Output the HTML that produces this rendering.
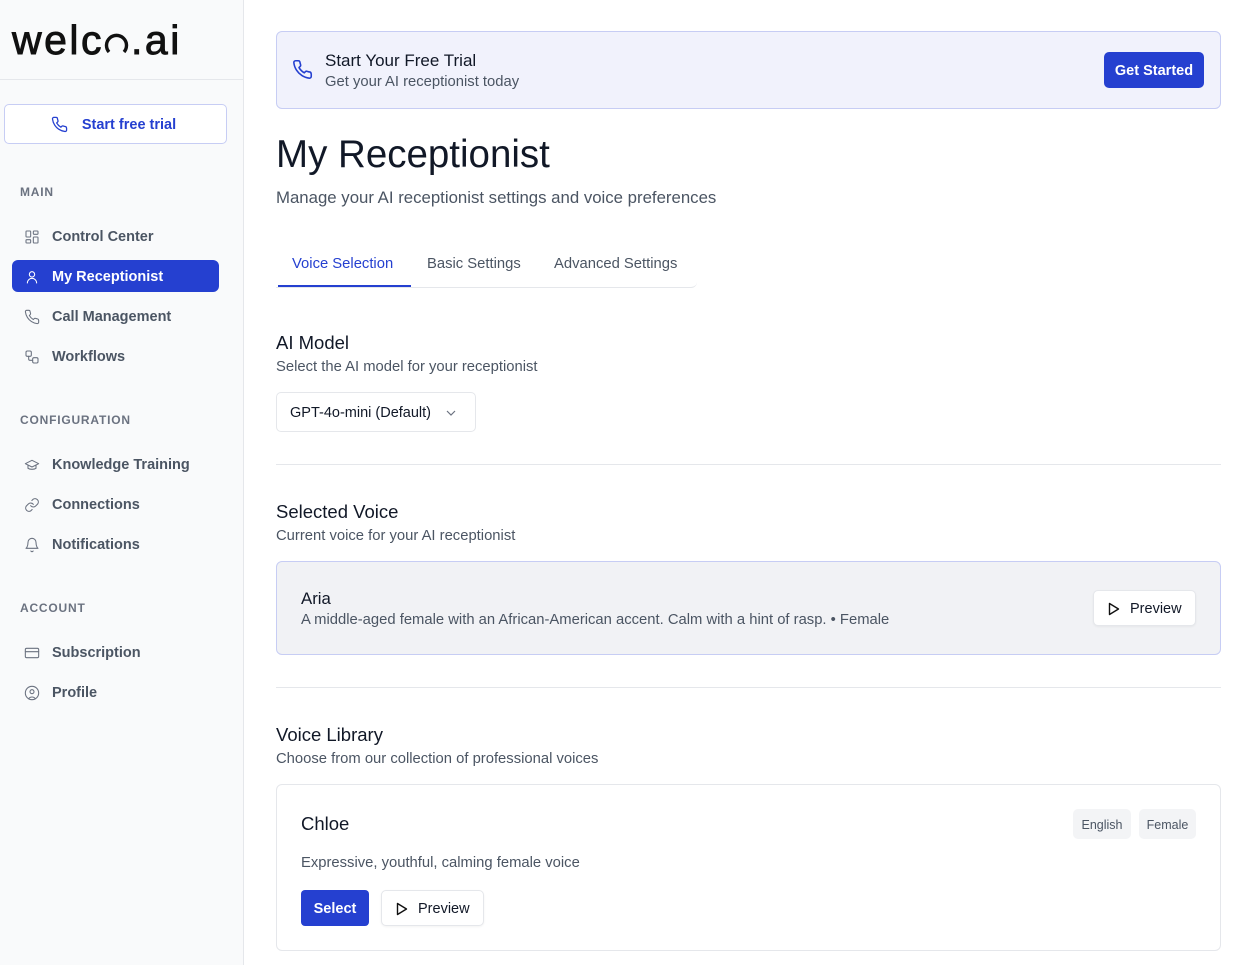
<!DOCTYPE html>
<html><head><meta charset="utf-8"><style>
*{box-sizing:border-box;margin:0;padding:0}
body{width:1246px;height:965px;overflow:hidden;font-family:"Liberation Sans",sans-serif;background:#fff;color:#111827;position:relative}
.a{position:absolute}
.side{left:0;top:0;width:244px;height:965px;background:#f9fafb;border-right:1px solid #e5e7eb}
.nav{position:absolute;left:12px;width:207px;height:32px;border-radius:6px;display:flex;align-items:center;padding-left:12px;padding-top:2px;font-size:14.5px;font-weight:bold;color:#4b5563}
.nav svg{width:16px;height:16px;margin-right:12px;fill:none;stroke:#6b7280;stroke-width:1.6;stroke-linecap:round;stroke-linejoin:round}
.nav.act{background:#2540d0;color:#fff}
.nav.act svg{stroke:#fff}
.sec{position:absolute;left:20px;font-size:12px;font-weight:bold;color:#6b7280;letter-spacing:.8px}
.h2{font-size:18.5px;color:#111827;font-weight:500}
.sub{font-size:14.8px;color:#4b5563}
.btn{position:absolute;border:1px solid #e5e7eb;border-radius:5px;background:#fff;display:flex;align-items:center;font-size:14.5px;color:#111827;box-shadow:0 1px 2px rgba(0,0,0,.05);padding-top:1px}
.hr{position:absolute;left:276px;width:945px;height:1px;background:#e5e7eb}
.logo span{letter-spacing:2.5px}
</style></head><body>
<div class="a side"></div>
<div class="a" style="left:0;top:79px;width:244px;height:1px;background:#e5e7eb"></div>
<div class="a logo" style="left:12px;top:15px;font-size:41px;line-height:50px;color:#111;-webkit-text-stroke:0.9px #111;display:flex;align-items:baseline"><span>welc</span><svg width="25" height="22" viewBox="0 0 25 22" style="margin:0 2px 0 0"><path d="M5 20 A10 10 0 1 1 20 20" fill="none" stroke="#111" stroke-width="3.4"/></svg><span>.ai</span></div>
<div class="a" style="left:4px;top:104px;width:223px;height:40px;border:1px solid #c7cdf4;border-radius:5px;background:#fff;display:flex;align-items:center;justify-content:center;color:#2540d0;font-size:14.5px;font-weight:bold;padding-top:1px"><svg width="17" height="17" viewBox="0 0 24 24" fill="none" stroke="#2540d0" stroke-width="1.8" stroke-linejoin="round" style="margin-right:14px;margin-left:-4px"><path d="M22 16.9v3a2 2 0 0 1-2.2 2 19.8 19.8 0 0 1-8.6-3.1 19.5 19.5 0 0 1-6-6A19.8 19.8 0 0 1 2.1 4.2 2 2 0 0 1 4.1 2h3a2 2 0 0 1 2 1.7c.1.9.4 1.8.7 2.7a2 2 0 0 1-.5 2.1L8 9.8a16 16 0 0 0 6 6l1.3-1.3a2 2 0 0 1 2.1-.4c.9.3 1.8.6 2.7.7a2 2 0 0 1 1.7 2z"/></svg>Start free trial</div>
<div class="sec" style="top:185px">MAIN</div>
<div class="nav" style="top:220px"><svg viewBox="0 0 24 24"><rect x="3" y="3" width="7" height="9" rx="1"/><rect x="14" y="3" width="7" height="5" rx="1"/><rect x="14" y="12" width="7" height="9" rx="1"/><rect x="3" y="16" width="7" height="5" rx="1"/></svg>Control Center</div>
<div class="nav act" style="top:260px"><svg viewBox="0 0 24 24"><circle cx="12" cy="8" r="4"/><path d="M5 21a7 7 0 0 1 14 0"/></svg>My Receptionist</div>
<div class="nav" style="top:300px"><svg viewBox="0 0 24 24"><path d="M22 16.9v3a2 2 0 0 1-2.2 2 19.8 19.8 0 0 1-8.6-3.1 19.5 19.5 0 0 1-6-6A19.8 19.8 0 0 1 2.1 4.2 2 2 0 0 1 4.1 2h3a2 2 0 0 1 2 1.7c.1.9.4 1.8.7 2.7a2 2 0 0 1-.5 2.1L8 9.8a16 16 0 0 0 6 6l1.3-1.3a2 2 0 0 1 2.1-.4c.9.3 1.8.6 2.7.7a2 2 0 0 1 1.7 2z"/></svg>Call Management</div>
<div class="nav" style="top:340px"><svg viewBox="0 0 24 24"><rect x="3" y="3" width="8" height="8" rx="2"/><rect x="13" y="13" width="8" height="8" rx="2"/><path d="M7 11v4a2 2 0 0 0 2 2h4"/></svg>Workflows</div>
<div class="sec" style="top:413px">CONFIGURATION</div>
<div class="nav" style="top:448px"><svg viewBox="0 0 24 24"><path d="M22 10 12 5 2 10l10 5 10-5z"/><path d="M6 12v5c3 2 9 2 12 0v-5"/></svg>Knowledge Training</div>
<div class="nav" style="top:488px"><svg viewBox="0 0 24 24"><path d="M10 13a5 5 0 0 0 7.5.5l3-3a5 5 0 0 0-7-7l-1.7 1.7"/><path d="M14 11a5 5 0 0 0-7.5-.5l-3 3a5 5 0 0 0 7 7l1.7-1.7"/></svg>Connections</div>
<div class="nav" style="top:528px"><svg viewBox="0 0 24 24"><path d="M6 8a6 6 0 0 1 12 0c0 7 3 9 3 9H3s3-2 3-9"/><path d="M10.3 21a1.9 1.9 0 0 0 3.4 0"/></svg>Notifications</div>
<div class="sec" style="top:601px">ACCOUNT</div>
<div class="nav" style="top:636px"><svg viewBox="0 0 24 24"><rect x="2" y="5" width="20" height="14" rx="2"/><path d="M2 10h20"/></svg>Subscription</div>
<div class="nav" style="top:676px"><svg viewBox="0 0 24 24"><circle cx="12" cy="12" r="10"/><circle cx="12" cy="10" r="3"/><path d="M7 20.7a6 6 0 0 1 10 0"/></svg>Profile</div>

<div class="a" style="left:276px;top:31px;width:945px;height:78px;background:#f1f2fc;border:1px solid #c7cdf4;border-radius:6px"></div>
<svg class="a" style="left:292px;top:59px" width="21" height="21" viewBox="0 0 24 24" fill="none" stroke="#2540d0" stroke-width="1.8" stroke-linejoin="round"><path d="M22 16.9v3a2 2 0 0 1-2.2 2 19.8 19.8 0 0 1-8.6-3.1 19.5 19.5 0 0 1-6-6A19.8 19.8 0 0 1 2.1 4.2 2 2 0 0 1 4.1 2h3a2 2 0 0 1 2 1.7c.1.9.4 1.8.7 2.7a2 2 0 0 1-.5 2.1L8 9.8a16 16 0 0 0 6 6l1.3-1.3a2 2 0 0 1 2.1-.4c.9.3 1.8.6 2.7.7a2 2 0 0 1 1.7 2z"/></svg>
<div class="a" style="left:325px;top:51px;font-size:17px;color:#111827">Start Your Free Trial</div>
<div class="a sub" style="left:325px;top:74px">Get your AI receptionist today</div>
<div class="a" style="left:1104px;top:52px;width:100px;height:36px;background:#2540d0;border-radius:5px;color:#fff;font-size:14.5px;font-weight:bold;display:flex;align-items:center;justify-content:center;padding-top:2px">Get Started</div>

<div class="a" style="left:276px;top:130px;font-size:38.5px;color:#111827;line-height:50px">My Receptionist</div>
<div class="a" style="left:276px;top:188px;font-size:16.8px;color:#4b5563">Manage your AI receptionist settings and voice preferences</div>

<div class="a" style="left:276px;top:240px;width:421px;height:48px;border-bottom:1px solid #e5e7eb;border-radius:0 0 6px 0"></div>
<div class="a" style="left:278px;top:285px;width:133px;height:2px;background:#2540d0"></div>
<div class="a" style="left:292px;top:256px;font-size:14.8px;color:#2540d0;font-weight:500">Voice Selection</div>
<div class="a" style="left:427px;top:256px;font-size:14.8px;color:#4b5563">Basic Settings</div>
<div class="a" style="left:554px;top:256px;font-size:14.8px;color:#4b5563">Advanced Settings</div>

<div class="a h2" style="left:276px;top:332px">AI Model</div>
<div class="a sub" style="left:276px;top:359px">Select the AI model for your receptionist</div>
<div class="btn" style="left:276px;top:392px;width:200px;height:40px;padding-left:13px;box-shadow:none">GPT-4o-mini (Default)<svg width="10" height="6" viewBox="0 0 10 6" style="margin-left:15px"><path d="M1 1l4 4 4-4" fill="none" stroke="#6b7280" stroke-width="1.2"/></svg></div>
<div class="hr" style="top:464px"></div>

<div class="a h2" style="left:276px;top:501px">Selected Voice</div>
<div class="a sub" style="left:276px;top:528px">Current voice for your AI receptionist</div>
<div class="a" style="left:276px;top:561px;width:945px;height:94px;background:#f1f2f5;border:1px solid #c7cdf4;border-radius:6px"></div>
<div class="a" style="left:301px;top:589px;font-size:16.8px;color:#111827">Aria</div>
<div class="a sub" style="left:301px;top:612px">A middle-aged female with an African-American accent. Calm with a hint of rasp. • Female</div>
<div class="btn" style="left:1093px;top:590px;width:103px;height:36px;padding-left:14px"><svg width="12" height="14" viewBox="0 0 12 14" style="margin-right:10px"><path d="M1.5 1.5v11l9-5.5z" fill="none" stroke="#111" stroke-width="1.4" stroke-linejoin="round"/></svg>Preview</div>
<div class="hr" style="top:687px"></div>

<div class="a h2" style="left:276px;top:724px">Voice Library</div>
<div class="a sub" style="left:276px;top:751px">Choose from our collection of professional voices</div>
<div class="a" style="left:276px;top:784px;width:945px;height:167px;border:1px solid #e5e7eb;border-radius:6px"></div>
<div class="a" style="left:301px;top:813px;font-size:18.5px;color:#111827">Chloe</div>
<div class="a" style="left:1073px;top:809px;width:58px;height:30px;background:#f3f4f6;border-radius:5px;font-size:12.5px;color:#4b5563;display:flex;align-items:center;justify-content:center;padding-top:1px">English</div>
<div class="a" style="left:1139px;top:809px;width:57px;height:30px;background:#f3f4f6;border-radius:5px;font-size:12.5px;color:#4b5563;display:flex;align-items:center;justify-content:center;padding-top:1px">Female</div>
<div class="a sub" style="left:301px;top:855px">Expressive, youthful, calming female voice</div>
<div class="a" style="left:301px;top:890px;width:68px;height:36px;background:#2540d0;border-radius:4px;color:#fff;font-size:14.5px;font-weight:bold;display:flex;align-items:center;justify-content:center;padding-top:2px">Select</div>
<div class="btn" style="left:381px;top:890px;width:103px;height:36px;padding-left:14px"><svg width="12" height="14" viewBox="0 0 12 14" style="margin-right:10px"><path d="M1.5 1.5v11l9-5.5z" fill="none" stroke="#111" stroke-width="1.4" stroke-linejoin="round"/></svg>Preview</div>
</body></html>
